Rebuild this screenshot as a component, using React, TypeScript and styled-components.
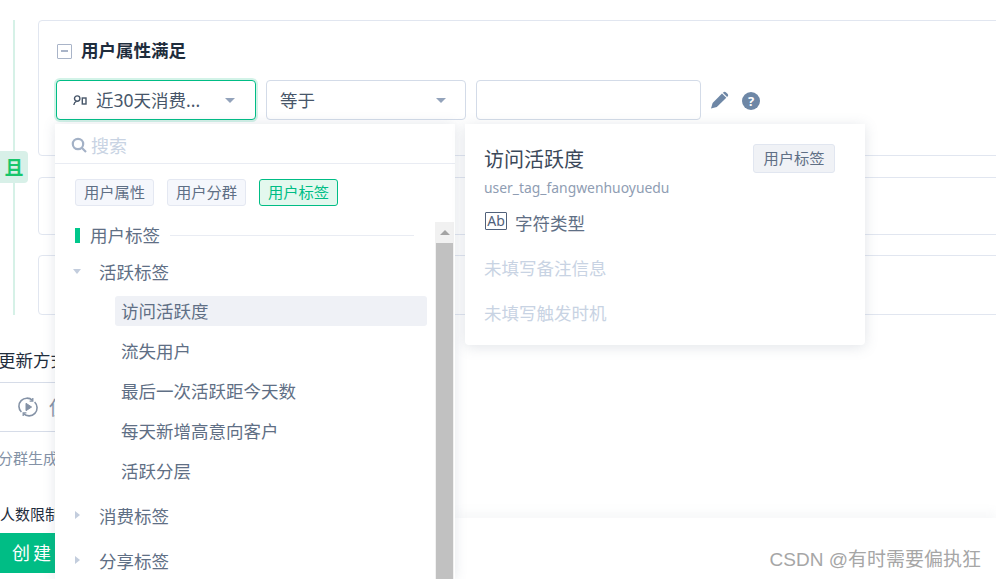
import React from "react";
import styled, { createGlobalStyle } from "styled-components";

const Global = createGlobalStyle`
  html, body { margin: 0; padding: 0; background: #fff; }
  body { font-family: "Noto Sans", "Noto Sans CJK SC", sans-serif; }
  * { box-sizing: border-box; }
`;
const Page = styled.div`
  position: relative; width: 996px; height: 579px; overflow: hidden; background: #fff;
  display: flex; flex-direction: column;
`;
const Conditions = styled.section`
  position: relative; display: flex; padding-top: 20px; height: 315px; flex: none;
`;
const Rail = styled.div`
  width: 2px; margin-left: 13px; background: #d6f1e7; flex: none;
`;
const AndBadge = styled.div`
  position: absolute; left: 0; top: 151px; width: 28px; height: 32px; border-radius: 0 4px 4px 0;
  background: #d8f0e8; color: #17c66b; font-size: 19px; font-weight: 700;
  display: flex; align-items: center; justify-content: center;
`;
const Cards = styled.div`
  margin-left: 23px; margin-right: -10px; flex: 1; display: flex; flex-direction: column;
`;
const Card = styled.div<{ $h: number; $gap?: number }>`
  height: ${p => p.$h}px; margin-bottom: ${p => p.$gap ?? 0}px; flex: none;
  border: 1px solid #e1e6f0; border-radius: 4px; background: #fff;
  padding: 0 0 0 18px;
`;
const CardHead = styled.div`
  display: flex; align-items: center; gap: 9px; height: 20px; margin-top: 20px;
`;
const CollapseBox = styled.span`
  width: 15px; height: 15px; border: 1.5px solid #a9b4c8; border-radius: 1px; display: flex;
  align-items: center; justify-content: center; flex: none;
  &::after { content: ""; width: 7px; height: 1.5px; background: #a9b4c8; }
`;
const CardTitle = styled.span`
  font-size: 17.5px; font-weight: 700; color: #1f2d3d; line-height: 20px; margin-top: -2px;
`;
const Fields = styled.div`
  display: flex; align-items: center; margin-top: 19px; margin-left: -1px;
`;
const SelectBox = styled.div<{ $active?: boolean }>`
  width: 200px; height: 40px; margin-right: 10px; flex: none;
  display: flex; align-items: center; position: relative;
  border: 1px solid ${p => (p.$active ? "#00bd85" : "#d3dbe8")}; border-radius: 4px;
  ${p => (p.$active ? "box-shadow: 0 0 0 2px #d3f3e8;" : "")}
  padding-left: ${p => (p.$active ? 16 : 13)}px; padding-right: ${p => (p.$active ? 20 : 19)}px;
  font-size: 17.5px; color: #475669; background: #fff; white-space: nowrap;
`;
const SelectText = styled.span`
  flex: 1; margin-left: 9px; margin-top: -1px; &:first-child { margin-left: 0; }
`;
const Caret = styled.span`
  width: 0; height: 0; border-left: 5px solid transparent; border-right: 5px solid transparent;
  border-top: 5px solid #93a3bb; flex: none;
`;
const ValueInput = styled.div`
  width: 225px; height: 40px; margin-right: 10px; flex: none; border: 1px solid #d3dbe8; border-radius: 4px;
`;
const ActionIcon = styled.svg`
  flex: none; display: block;
`;
const HelpBadge = styled.span`
  width: 18px; height: 18px; border-radius: 50%; background: #6e87a6; color: #fff; font-size: 13px; font-weight: 700;
  display: flex; align-items: center; justify-content: center; margin-left: 13px; margin-top: 2px; flex: none;
`;
const Lower = styled.div`
  flex: 1; display: flex; flex-direction: column; min-height: 0;
`;
const SectionTitle = styled.div`
  margin: 34px 0 0 -2px; font-size: 17.5px; line-height: 22px; color: #1f2d3d; white-space: nowrap;
`;
const Rule = styled.div<{ $mt?: number }>`
  height: 1px; background: #d6dce8; width: 60px; margin-top: ${p => p.$mt ?? 0}px; flex: none;
`;
const ModeRow = styled.div`
  height: 48px; display: flex; align-items: center; padding-left: 18px; gap: 11px; color: #8492a6; font-size: 19px;
`;
const Hint = styled.div`
  margin: 16px 0 0 -2px; font-size: 15px; line-height: 20px; color: #8492a6; white-space: nowrap;
`;
const LimitLabel = styled.div`
  margin: 36px 0 0 0; font-size: 15px; line-height: 20px; color: #1f2d3d; white-space: nowrap;
`;
const CreateButton = styled.div`
  margin-top: 9px; width: 56px; height: 40px; background: #00bd85; color: #fff; font-size: 18px;
  padding-left: 12px; line-height: 40px; letter-spacing: 3px; white-space: nowrap; overflow: hidden;
`;
const FooterBar = styled.div`
  position: absolute; left: 455px; right: 0; top: 518px; bottom: 0; background: #fff;
  box-shadow: 0 -6px 10px rgba(120, 135, 160, 0.06);
`;
const Watermark = styled.div`
  position: absolute; right: 15px; top: 548px; font-family: "Liberation Sans", "Noto Sans CJK SC", sans-serif;
  font-size: 19px; line-height: 24px; color: #a6a6a6;
`;
const Dropdown = styled.div`
  position: absolute; left: 55px; top: 124px; width: 400px; height: 455px; background: #fff;
  box-shadow: 0 0 12px rgba(90, 105, 130, 0.16); display: flex; flex-direction: column;
`;
const SearchRow = styled.div`
  height: 40px; flex: none; border-bottom: 1px solid #e9ecf3; display: flex; align-items: center; gap: 4px;
  padding: 3px 0 0 16px; color: #c8d3e3; font-size: 18px;
`;
const TabRow = styled.div`
  display: flex; gap: 13px; padding: 15px 0 0 20px; height: 58px; flex: none;
`;
const TypeTab = styled.div<{ $on?: boolean }>`
  width: 79px; height: 27px; border-radius: 3px; font-size: 15.3px; line-height: 25px; text-align: center;
  border: 1px solid ${p => (p.$on ? "#00bd85" : "#e4e8f2")};
  background: ${p => (p.$on ? "#e3f8ee" : "#f5f7fc")};
  color: ${p => (p.$on ? "#00bd85" : "#5f6f85")};
`;
const ListArea = styled.div`
  position: relative; flex: 1; min-height: 0; padding-left: 20px;
`;
const GroupHead = styled.div`
  display: flex; align-items: center; height: 28px; font-size: 17.5px; line-height: 26px; color: #5f6f85;
  &::before { content: ""; width: 5px; height: 15px; background: #00c78b; margin-right: 10px; flex: none; margin-top: -1px; }
`;
const GroupName = styled.span`
  margin-top: -2px;
`;
const HeadLine = styled.span`
  flex: none; width: 244px; height: 1px; background: #e9ecf3; margin-left: 10px; margin-top: -2px;
`;
const Branch = styled.div<{ $mt: number }>`
  display: flex; align-items: center; height: 24px; margin-top: ${p => p.$mt}px; font-size: 17.5px; color: #5f6f85;
`;
const BranchArrow = styled.span<{ $open?: boolean }>`
  width: 26px; flex: none; margin-left: -2px; display: flex;
  &::before {
    content: ""; width: 0; height: 0; display: block; margin-left: ${p => (p.$open ? 0 : 2)}px;
    ${p => p.$open
      ? "border-left: 4.5px solid transparent; border-right: 4.5px solid transparent; border-top: 5px solid #c3cddd;"
      : "border-top: 4.5px solid transparent; border-bottom: 4.5px solid transparent; border-left: 5px solid #c3cddd;"}
  }
`;
const Leafs = styled.div`
  margin: 13px 0 0 40px; width: 312px; display: flex; flex-direction: column; gap: 10px;
`;
const Leaf = styled.div<{ $on?: boolean }>`
  height: 30px; line-height: 30px; padding-left: 6px; font-size: 17.5px; color: #5f6f85; border-radius: 3px;
  background: ${p => (p.$on ? "#eff1f6" : "transparent")};
`;
const Scrollbar = styled.div`
  position: absolute; right: 1px; top: 0; bottom: 0; width: 19px; background: #f1f1f1; padding: 0 1px;
  display: flex; flex-direction: column; align-items: stretch;
`;
const ScrollUp = styled.div`
  height: 21px; flex: none; display: flex; align-items: center; justify-content: center;
  &::before { content: ""; width: 0; height: 0; border-left: 5px solid transparent; border-right: 5px solid transparent; border-bottom: 5px solid #a3a3a3; }
`;
const ScrollThumb = styled.div`
  flex: 1; background: #c1c1c1;
`;
const Detail = styled.div`
  position: absolute; left: 465px; top: 124px; width: 400px; height: 221px; background: #fff; border-radius: 0 0 4px 4px;
  box-shadow: 0 2px 14px rgba(90, 105, 130, 0.18); padding: 20px 20px 0;
`;
const DetailTop = styled.div`
  display: flex; align-items: center; justify-content: space-between; height: 29px; padding-right: 10px;
`;
const DetailName = styled.div`
  font-size: 20px; color: #3b4859; margin-left: -1px;
`;
const DetailBadge = styled.div`
  width: 82px; height: 29px; line-height: 27px; text-align: center; font-size: 15.3px; color: #5f6f85;
  background: #f0f2f6; border: 1px solid #e1e6f0; border-radius: 3px;
`;
const DetailCode = styled.div`
  font-size: 13.9px; color: #8f9db3; line-height: 20px; margin-top: 5px; margin-left: -1px;
`;
const TypeRow = styled.div`
  display: flex; align-items: center; gap: 8px; height: 24px; margin-top: 12px; font-size: 17.5px; color: #5f6f85;
`;
const AbMark = styled.span`
  width: 22px; height: 18px; margin-top: -2px; border: 1.5px solid #51617a; font-size: 14px; line-height: 15px; text-align: center; color: #51617a; flex: none; border-radius: 1px;
`;
const Muted = styled.div<{ $mt: number }>`
  font-size: 17.5px; line-height: 24px; color: #c8d3e3; margin-top: ${p => p.$mt}px; margin-left: -1px;
`;

const App = () => (
  <Page>
    <Global />
    <Conditions>
      <Rail />
      <AndBadge>且</AndBadge>
      <Cards>
        <Card $h={136} $gap={21}>
          <CardHead><CollapseBox /><CardTitle>用户属性满足</CardTitle></CardHead>
          <Fields>
            <SelectBox $active>
              <ActionIcon width="14" height="11" viewBox="0 0 14 11" fill="none" stroke="#475669" strokeWidth="1.4">
                <circle cx="4.2" cy="3.6" r="2.7" />
                <path d="M.8 10c.3-2 1.3-3.3 2.6-3.7" />
                <rect x="9.3" y="3" width="3.7" height="6" />
              </ActionIcon>
              <SelectText>近30天消费...</SelectText>
              <Caret />
            </SelectBox>
            <SelectBox><SelectText>等于</SelectText><Caret /></SelectBox>
            <ValueInput />
            <ActionIcon width="18" height="18" viewBox="0 0 18 18" fill="#6e87a6">
              <path d="M0 17.5l1.6-5.6L11 2.6l4.3 4.2L5.8 16z" />
              <path d="M12.2 1.4c.9-.9 2-.9 2.9 0l1.4 1.3c.9.9.9 2 0 2.9l-.4.4-4.3-4.2z" />
            </ActionIcon>
            <HelpBadge>?</HelpBadge>
          </Fields>
        </Card>
        <Card $h={58} $gap={20} />
        <Card $h={60} />
      </Cards>
    </Conditions>
    <Lower>
      <SectionTitle>更新方式</SectionTitle>
      <Rule $mt={11} />
      <ModeRow>
        <ActionIcon width="20" height="20" viewBox="0 0 20 20" fill="none" stroke="#8492a6" strokeWidth="1.6">
          <path d="M3.4 15A8 8 0 0 1 14.5 3.4" />
          <path d="M16.6 5A8 8 0 0 1 5.5 16.6" />
          <path d="M14.8.9v3.2h-3.2M5.2 19.1v-3.2h3.2" strokeWidth="1.3" />
          <path d="M8 6.3v7.4l5.6-3.7z" fill="#8492a6" strokeWidth="1" />
        </ActionIcon>
        <span>使用</span>
      </ModeRow>
      <Rule />
      <Hint>分群生成</Hint>
      <LimitLabel>人数限制</LimitLabel>
      <CreateButton>创建</CreateButton>
    </Lower>
    <FooterBar />
    <Watermark>CSDN @有时需要偏执狂</Watermark>
    <Dropdown>
      <SearchRow>
        <ActionIcon width="16" height="16" viewBox="0 0 16 16" fill="none" stroke="#a3b1c6" strokeWidth="2.2">
          <circle cx="7" cy="7" r="5.2" /><path d="M11 11l4 4" />
        </ActionIcon>
        <span>搜索</span>
      </SearchRow>
      <TabRow>
        <TypeTab>用户属性</TypeTab>
        <TypeTab>用户分群</TypeTab>
        <TypeTab $on>用户标签</TypeTab>
      </TabRow>
      <ListArea>
        <GroupHead><GroupName>用户标签</GroupName><HeadLine /></GroupHead>
        <Branch $mt={9}><BranchArrow $open />活跃标签</Branch>
        <Leafs>
          <Leaf $on>访问活跃度</Leaf>
          <Leaf>流失用户</Leaf>
          <Leaf>最后一次活跃距今天数</Leaf>
          <Leaf>每天新增高意向客户</Leaf>
          <Leaf>活跃分层</Leaf>
        </Leafs>
        <Branch $mt={17}><BranchArrow />消费标签</Branch>
        <Branch $mt={21}><BranchArrow />分享标签</Branch>
        <Scrollbar><ScrollUp /><ScrollThumb /></Scrollbar>
      </ListArea>
    </Dropdown>
    <Detail>
      <DetailTop>
        <DetailName>访问活跃度</DetailName>
        <DetailBadge>用户标签</DetailBadge>
      </DetailTop>
      <DetailCode>user_tag_fangwenhuoyuedu</DetailCode>
      <TypeRow><AbMark>Ab</AbMark>字符类型</TypeRow>
      <Muted $mt={22}>未填写备注信息</Muted>
      <Muted $mt={21}>未填写触发时机</Muted>
    </Detail>
  </Page>
);

export default App;
